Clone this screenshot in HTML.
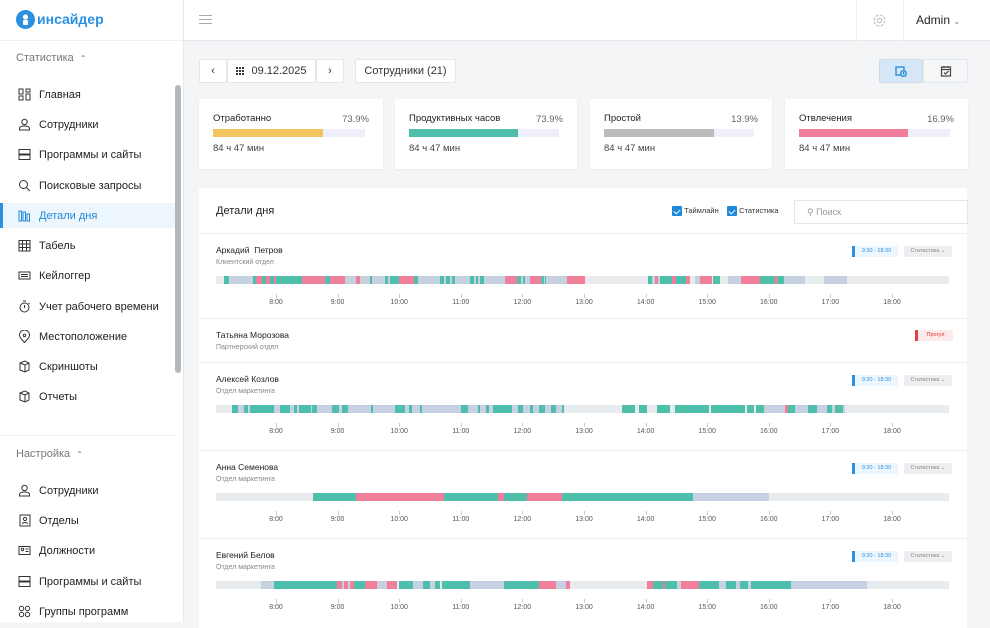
<!DOCTYPE html>
<html><head><meta charset="utf-8">
<style>
*{box-sizing:border-box;margin:0;padding:0}
body{width:990px;height:622px;overflow:hidden;background:#f3f5f7;font-family:"Liberation Sans",sans-serif;color:#222;position:relative}
.abs{position:absolute}
#side{position:absolute;left:0;top:0;width:184px;height:622px;background:#fff;border-right:1px solid #e6e8eb;z-index:2}
#hdr{position:absolute;left:184px;top:0;width:806px;height:41px;background:#fff;border-bottom:1px solid #e6e8eb}
.sec{position:absolute;left:16px;font-size:11px;color:#777}
.it{position:absolute;left:0;width:176px;height:25px;font-size:11px;color:#222;display:flex;align-items:center}
.it svg{position:absolute;left:18px;width:13px;height:13px}
.it span{position:absolute;left:39px}
.it.act{background:#eef6fd;color:#1e88d9}
.it.act:before{content:"";position:absolute;left:0;top:0;width:3px;height:25px;background:#2b90df}
.btn{position:absolute;top:59px;height:24px;background:#fff;border:1px solid #e3e6ea;border-radius:2px;font-size:11px;display:flex;align-items:center;justify-content:center;color:#333}
.card{position:absolute;top:99px;height:70px;background:#fff;border-radius:2px;box-shadow:0 1px 2px rgba(0,0,0,.05)}
.card .t{position:absolute;left:14px;top:14px;font-size:9.5px;color:#222}
.card .p{position:absolute;right:14px;top:15px;font-size:9.5px;color:#666}
.card .b{position:absolute;left:14px;right:18px;top:30px;height:8px;background:#efeefb}
.card .b i{position:absolute;left:0;top:0;height:8px}
.card .m{position:absolute;left:14px;top:44px;font-size:9.5px;color:#444}
#main{position:absolute;left:199px;top:188px;width:768px;height:440px;background:#fff}
.row{position:absolute;left:0;width:768px;border-top:1px solid #eceef0}
.nm{position:absolute;left:17px;font-size:8.5px;color:#222}
.dp{position:absolute;left:17px;font-size:7px;color:#888}
.track{position:absolute;left:17px;width:733px;height:8px;background:#e9ecee}
.track i{position:absolute;top:0;height:8px}
.tick{position:absolute;width:1px;height:4px;background:#ccc}
.hl{position:absolute;font-size:7px;color:#555;width:30px;text-align:center}
.tb{position:absolute;left:653px;width:46px;height:11px;background:#eef6fd;border-left:3px solid #2b90df;font-size:5.5px;color:#2b90df;line-height:11px;text-align:center}
.st{position:absolute;left:705px;width:48px;height:11px;background:#eceef0;font-size:5.5px;color:#888;line-height:11px;text-align:center}
.cb{display:inline-block;width:10px;height:10px;background:#1e88d9;border-radius:1px;vertical-align:middle;position:relative}
.cb:after{content:"";position:absolute;left:3px;top:1.5px;width:3px;height:5px;border:solid #fff;border-width:0 1.3px 1.3px 0;transform:rotate(45deg)}
</style></head><body>
<div id="side">
 <svg class="abs" style="left:16px;top:10px" width="19" height="19" viewBox="0 0 19 19"><circle cx="9.5" cy="9.5" r="9.5" fill="#2b90df"/><circle cx="9.5" cy="7" r="2.6" fill="#fff"/><rect x="7" y="10" width="5" height="5" rx="1" fill="#fff"/></svg>
 <div class="abs" style="left:37px;top:11px;font-size:14px;font-weight:bold;color:#2b90df">инсайдер</div>
 <div class="abs" style="left:0;top:40px;width:183px;height:1px;background:#eceef0"></div>
 <div class="sec" style="top:52px">Статистика &nbsp;<span style="font-size:8px">&#8963;</span></div>
 <div class="it" style="top:82px"><svg viewBox="0 0 13 13" fill="none" stroke="#333"><rect x="1" y="1" width="4" height="5"/><rect x="8" y="1" width="4" height="3"/><rect x="1" y="8" width="4" height="4"/><rect x="8" y="6" width="4" height="6"/></svg><span>Главная</span></div>
 <div class="it" style="top:112px"><svg viewBox="0 0 13 13" fill="none" stroke="#333"><circle cx="6.5" cy="4" r="2.7"/><path d="M1.5 12v-1.5c0-1.5 1.5-2.5 5-2.5s5 1 5 2.5V12z"/></svg><span>Сотрудники</span></div>
 <div class="it" style="top:142px"><svg viewBox="0 0 13 13" fill="none" stroke="#333"><rect x="1" y="1.5" width="11" height="4.5"/><rect x="1" y="7" width="11" height="4.5"/></svg><span>Программы и сайты</span></div>
 <div class="it" style="top:173px"><svg viewBox="0 0 13 13" fill="none" stroke="#333"><circle cx="5.5" cy="5.5" r="4"/><path d="M8.5 8.5l3.5 3.5"/></svg><span>Поисковые запросы</span></div>
 <div class="it act" style="top:203px"><svg viewBox="0 0 13 13" fill="none" stroke="#1e88d9"><rect x="1" y="2" width="2.5" height="10"/><rect x="5" y="3" width="2.5" height="9"/><rect x="9" y="5" width="2.5" height="7"/></svg><span>Детали дня</span></div>
 <div class="it" style="top:233px"><svg viewBox="0 0 13 13" fill="none" stroke="#333"><rect x="1" y="1.5" width="11" height="10.5"/><path d="M1 5h11M1 8.5h11M4.5 1.5v10.5M8.5 1.5v10.5"/></svg><span>Табель</span></div>
 <div class="it" style="top:263px"><svg viewBox="0 0 13 13" fill="none" stroke="#333"><rect x="1" y="3" width="11" height="7"/><path d="M3 5.5h7M3 7.5h7"/></svg><span>Кейлоггер</span></div>
 <div class="it" style="top:294px"><svg viewBox="0 0 13 13" fill="none" stroke="#333"><circle cx="6.5" cy="7.5" r="4.5"/><path d="M6.5 5v3M5 1h3M10.5 3l1 1"/></svg><span>Учет рабочего времени</span></div>
 <div class="it" style="top:324px"><svg viewBox="0 0 13 13" fill="none" stroke="#333"><path d="M6.5 12.5L2.5 8A5 5 0 1 1 10.5 8z"/><circle cx="6.5" cy="5.5" r="1.2"/></svg><span>Местоположение</span></div>
 <div class="it" style="top:354px"><svg viewBox="0 0 13 13" fill="none" stroke="#333"><path d="M2 3l5-2 4 2v7l-4 2-5-2zM7 5v7M2 3l5 2 4-2"/></svg><span>Скриншоты</span></div>
 <div class="it" style="top:384px"><svg viewBox="0 0 13 13" fill="none" stroke="#333"><path d="M2 3l5-2 4 2v7l-4 2-5-2zM7 5v7M2 3l5 2 4-2"/></svg><span>Отчеты</span></div>
 <div class="abs" style="left:0;top:435px;width:176px;height:1px;background:#eceef0"></div>
 <div class="sec" style="top:448px">Настройка &nbsp;<span style="font-size:8px">&#8963;</span></div>
 <div class="it" style="top:478px"><svg viewBox="0 0 13 13" fill="none" stroke="#333"><circle cx="6.5" cy="4" r="2.7"/><path d="M1.5 12v-1.5c0-1.5 1.5-2.5 5-2.5s5 1 5 2.5V12z"/></svg><span>Сотрудники</span></div>
 <div class="it" style="top:508px"><svg viewBox="0 0 13 13" fill="none" stroke="#333"><rect x="2" y="1" width="10" height="11"/><circle cx="7" cy="5" r="1.6"/><path d="M4.5 10c0-2 5-2 5 0"/></svg><span>Отделы</span></div>
 <div class="it" style="top:538px"><svg viewBox="0 0 13 13" fill="none" stroke="#333"><rect x="1" y="2.5" width="11" height="8"/><circle cx="4.5" cy="5.5" r="1.2"/><path d="M7.5 5h3M7.5 7.5h3"/></svg><span>Должности</span></div>
 <div class="it" style="top:569px"><svg viewBox="0 0 13 13" fill="none" stroke="#333"><rect x="1" y="1.5" width="11" height="4.5"/><rect x="1" y="7" width="11" height="4.5"/></svg><span>Программы и сайты</span></div>
 <div class="it" style="top:599px"><svg viewBox="0 0 13 13" fill="none" stroke="#333"><circle cx="3.5" cy="3.5" r="2.2"/><circle cx="9.5" cy="3.5" r="2.2"/><circle cx="3.5" cy="9.5" r="2.2"/><circle cx="9.5" cy="9.5" r="2.2"/></svg><span>Группы программ</span></div>
 <div class="abs" style="left:175px;top:85px;width:6px;height:288px;background:#b5b8bb;border-radius:3px"></div>
</div>
<div id="hdr">
 <div class="abs" style="left:15px;top:15px;width:13px;height:1px;background:#aaa;box-shadow:0 4px 0 #aaa,0 8px 0 #aaa"></div>
 <div class="abs" style="left:672px;top:0;width:1px;height:41px;background:#eceef0"></div>
 <div class="abs" style="left:719px;top:0;width:1px;height:41px;background:#eceef0"></div>
 <svg class="abs" style="left:688px;top:13px" width="15" height="15" viewBox="0 0 15 15" fill="none" stroke="#bbb"><circle cx="7.5" cy="7.5" r="2.3"/><circle cx="7.5" cy="7.5" r="5.5" stroke-dasharray="3 1.3"/></svg>
 <div class="abs" style="left:732px;top:13px;font-size:12px;color:#222">Admin <span style="font-size:8px;color:#777">&#8964;</span></div>
</div>
<div class="btn" style="left:199px;width:28px">&#8249;</div>
<div class="btn" style="left:227px;width:89px"><svg width="10" height="9" viewBox="0 0 10 9" style="margin-right:5px" fill="#333"><rect x="0" y="0" width="2" height="2"/><rect x="3" y="0" width="2" height="2"/><rect x="6" y="0" width="2" height="2"/><rect x="0" y="3" width="2" height="2"/><rect x="3" y="3" width="2" height="2"/><rect x="6" y="3" width="2" height="2"/><rect x="0" y="6" width="2" height="2"/><rect x="3" y="6" width="2" height="2"/><rect x="6" y="6" width="2" height="2"/></svg>09.12.2025</div>
<div class="btn" style="left:316px;width:28px">&#8250;</div>
<div class="btn" style="left:355px;width:101px">Сотрудники (21)</div>
<div class="btn" style="left:879px;width:44px;background:#d6e8f7;border-color:#d0dbe6"><svg width="12" height="12" viewBox="0 0 12 12" fill="none" stroke="#1e88d9" stroke-width="1.3"><rect x="1" y="2" width="8" height="8"/><circle cx="8.5" cy="8.5" r="2.8" fill="#d6e8f7"/><path d="M8.5 7v1.7h1"/></svg></div>
<div class="btn" style="left:923px;width:45px;background:#f5f6f8"><svg width="12" height="12" viewBox="0 0 12 12" fill="none" stroke="#444" stroke-width="1.2"><rect x="1.5" y="2" width="9" height="9"/><path d="M1.5 4.5h9M4 7.5l1.5 1.5 3-3M4 1v2M8 1v2"/></svg></div>

<div class="card" style="left:199px;width:184px"><div class="t">Отработанно</div><div class="p">73.9%</div><div class="b"><i style="width:110px;background:#f3c55d"></i></div><div class="m">84 ч 47 мин</div></div>
<div class="card" style="left:395px;width:182px"><div class="t">Продуктивных часов</div><div class="p">73.9%</div><div class="b"><i style="width:109px;background:#4dbfab"></i></div><div class="m">84 ч 47 мин</div></div>
<div class="card" style="left:590px;width:182px"><div class="t">Простой</div><div class="p">13.9%</div><div class="b"><i style="width:110px;background:#bcbcbc"></i></div><div class="m">84 ч 47 мин</div></div>
<div class="card" style="left:785px;width:183px"><div class="t">Отвлечения</div><div class="p">16.9%</div><div class="b"><i style="width:109px;background:#f0809a"></i></div><div class="m">84 ч 47 мин</div></div>

<div id="main">
 <div class="abs" style="left:17px;top:17px;font-size:11px;color:#222">Детали дня</div>
 <div class="abs" style="left:473px;top:18px;font-size:7.5px;color:#333"><span class="cb"></span> Таймлайн &nbsp;&nbsp; <span class="cb"></span> Статистика</div>
 <div class="abs" style="left:595px;top:12px;width:174px;height:24px;border:1px solid #e3e6ea;font-size:9px;color:#999;padding:6px 0 0 12px">&#9906; Поиск</div>
 <div id="rows"></div>
</div>
<script>
var T='#4dbfab',P='#f0809a',B='#c5d0e0';
var rows=[
{y:45,n:'Аркадий&nbsp; Петров',d:'Клиентский отдел',s:[[224,585,B],[224,229,T],[253,256,T],[256,262,P],[262,266,T],[266,270,P],[270,274,T],[274,276,P],[276,282,T],[282,302,T],[302,325,P],[325,330,T],[330,345,P],[345,356,B],[356,360,P],[370,372,T],[385,399,T],[388,390,B],[399,410,P],[410,414,P],[414,418,T],[440,455,T],[444,446,B],[450,452,B],[455,470,B],[470,484,T],[474,476,B],[478,480,B],[505,517,P],[517,525,T],[521,523,B],[530,541,P],[541,546,T],[544,545,B],[550,560,B],[567,585,P],[648,690,B],[648,652,T],[655,658,P],[660,690,T],[672,676,P],[686,690,P],[695,700,B],[700,712,P],[713,720,T],[728,750,B],[741,750,P],[750,760,P],[760,766,T],[766,784,T],[775,778,P],[784,805,B],[824,847,B]]},
{y:130,n:'Татьяна Морозова',d:'Партнерский отдел',s:null},
{y:174,n:'Алексей Козлов',d:'Отдел маркетинга',s:[[232,564,B],[232,238,T],[244,248,T],[250,274,T],[280,290,T],[294,297,T],[299,311,T],[312,317,T],[332,339,T],[342,348,T],[371,373,T],[395,405,T],[409,412,T],[420,422,T],[461,468,T],[478,480,T],[486,489,T],[493,512,T],[518,523,T],[530,533,T],[539,545,T],[551,556,T],[562,564,T],[622,635,T],[639,647,T],[657,670,T],[675,709,T],[711,745,T],[747,754,T],[756,764,T],[764,845,B],[785,788,P],[788,795,T],[808,817,T],[827,832,T],[835,843,T]]},
{y:262,n:'Анна Семенова',d:'Отдел маркетинга',s:[[313,356,T],[356,444,P],[444,498,T],[498,504,P],[504,527,T],[527,562,P],[562,693,T],[693,769,B]]},
{y:350,n:'Евгений Белов',d:'Отдел маркетинга',s:[[261,274,B],[274,337,T],[337,354,P],[342,344,B],[348,350,B],[354,365,T],[365,377,P],[377,387,B],[387,397,P],[399,413,T],[413,423,B],[423,430,T],[430,435,B],[435,440,T],[442,470,T],[470,504,B],[504,539,T],[539,556,P],[556,566,B],[566,570,P],[647,653,P],[653,663,T],[663,665,P],[665,677,T],[677,681,B],[681,699,P],[699,719,T],[719,726,B],[726,736,T],[736,740,B],[740,748,T],[748,751,B],[751,791,T],[791,867,B]]}];
var h='';
rows.forEach(function(r,i){
 var y=r.y;
 h+='<div class="row" style="top:'+y+'px;height:'+(i==1?44:88)+'px"></div>';
 h+='<div class="nm" style="top:'+(y+12)+'px">'+r.n+'</div><div class="dp" style="top:'+(y+26)+'px">'+r.d+'</div>';
 if(!r.s){h+='<div class="abs" style="left:716px;top:'+(y+12)+'px;width:38px;height:11px;background:#fdeaea;border-left:3px solid #e04545;font-size:5.5px;color:#d33;line-height:11px;text-align:center">Прогул</div>';return;}
 h+='<div class="tb" style="top:'+(y+13)+'px">9:30 - 18:30</div><div class="st" style="top:'+(y+13)+'px">Статистика &#8964;</div>';
 var ty=y+43;
 h+='<div class="track" style="top:'+ty+'px">';
 r.s.forEach(function(s){h+='<i style="left:'+(s[0]-216)+'px;width:'+(s[1]-s[0])+'px;background:'+s[2]+'"></i>';});
 h+='</div>';
 for(var k=0;k<11;k++){var x=77+k*61.6;h+='<div class="tick" style="left:'+x+'px;top:'+(ty+18)+'px"></div><div class="hl" style="left:'+(x-15)+'px;top:'+(ty+23)+'px">'+(8+k)+':00</div>';}
});
document.getElementById('rows').innerHTML=h;
</script>
</body></html>
